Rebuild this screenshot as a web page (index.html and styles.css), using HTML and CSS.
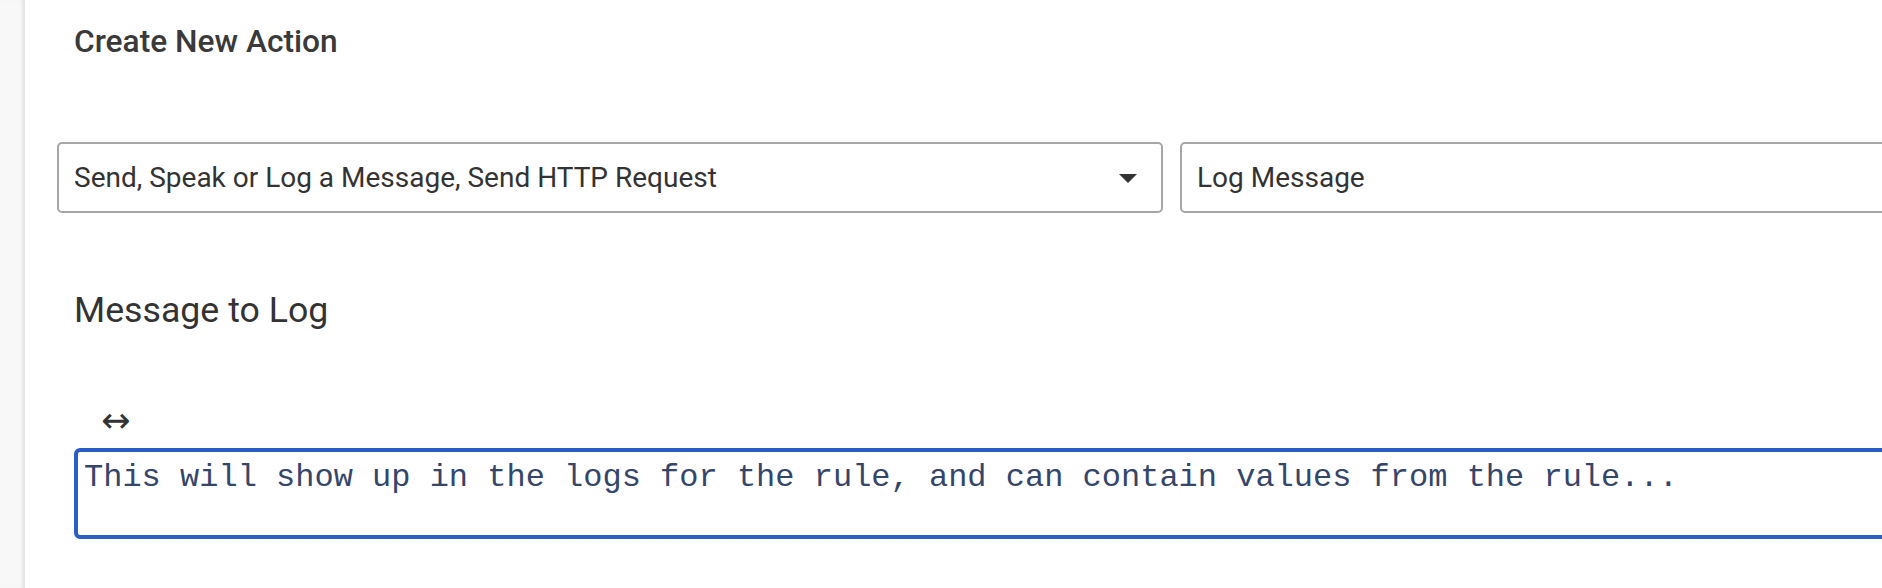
FILE: index.html
```html
<!DOCTYPE html>
<html lang="en">
<head>
<meta charset="utf-8">
<title>Create New Action</title>
<link rel="stylesheet" href="styles.css">
</head>
<body>
<div class="layout">
  <aside class="sidebar"></aside>
  <main class="main">
    <h1 class="title">Create New Action</h1>
    <div class="selects">
      <div class="select select-category">
        <span class="select-text">Send, Speak or Log a Message, Send HTTP Request</span>
        <span class="caret"></span>
      </div>
      <div class="select select-action">
        <span class="select-text">Log Message</span>
      </div>
    </div>
    <h2 class="field-label">Message to Log</h2>
    <div class="resize-toggle">&#8596;</div>
    <div class="textarea">This will show up in the logs for the rule, and can contain values from the rule...</div>
  </main>
</div>
</body>
</html>
```

FILE: styles.css
```css
html, body {
  margin: 0;
  padding: 0;
  background: #ffffff;
  overflow: hidden;
}

.layout {
  display: flex;
  width: 1882px;
  height: 588px;
  overflow: hidden;
}

.sidebar {
  flex: 0 0 24px;
  background: #f8f8f8;
  box-shadow: inset -3px 0 3px -1px rgba(0, 0, 0, 0.08);
  border-right: 1px solid #e6e6e6;
}

.main {
  flex: 1;
  min-width: 0;
  padding-left: 32px;
  overflow: hidden;
  font-family: Roboto, "Liberation Sans", sans-serif;
  color: #333333;
}

.title {
  margin: 0;
  padding: 24px 0 0 17px;
  font-size: 31.7px;
  font-weight: 500;
  line-height: 36px;
  color: #3a3a3a;
}

.selects {
  display: flex;
  gap: 17px;
  margin-top: 82px;
  width: 2100px;
}

.select {
  box-sizing: border-box;
  height: 71px;
  border: 2px solid #a6a6a6;
  border-radius: 5px;
  display: flex;
  align-items: center;
  padding: 0 24px 0 15px;
  background: #ffffff;
}

.select-category {
  flex: 0 0 1106px;
  justify-content: space-between;
}

.select-action {
  flex: 0 0 900px;
}

.select-text {
  font-size: 28px;
  color: #333333;
  white-space: nowrap;
}

.caret {
  width: 0;
  height: 0;
  border-left: 9px solid transparent;
  border-right: 9px solid transparent;
  border-top: 9px solid #333333;
  margin-top: 2px;
}

.field-label {
  margin: 78px 0 0 0;
  padding-left: 17px;
  font-size: 35.7px;
  font-weight: 400;
  line-height: 38px;
  color: #333333;
}

.resize-toggle {
  margin-top: 75px;
  padding-left: 44px;
  font-family: "DejaVu Sans", sans-serif;
  font-size: 35px;
  line-height: 32px;
  color: #333333;
}

.textarea {
  box-sizing: border-box;
  margin: 12px 0 0 17px;
  width: 1900px;
  height: 91px;
  border: 4px solid #2a5ec6;
  border-radius: 6px;
  padding: 8px 6px 4px;
  font-family: "Liberation Mono", "Courier New", monospace;
  font-size: 32px;
  line-height: 36px;
  color: #35466a;
  white-space: nowrap;
}
```
